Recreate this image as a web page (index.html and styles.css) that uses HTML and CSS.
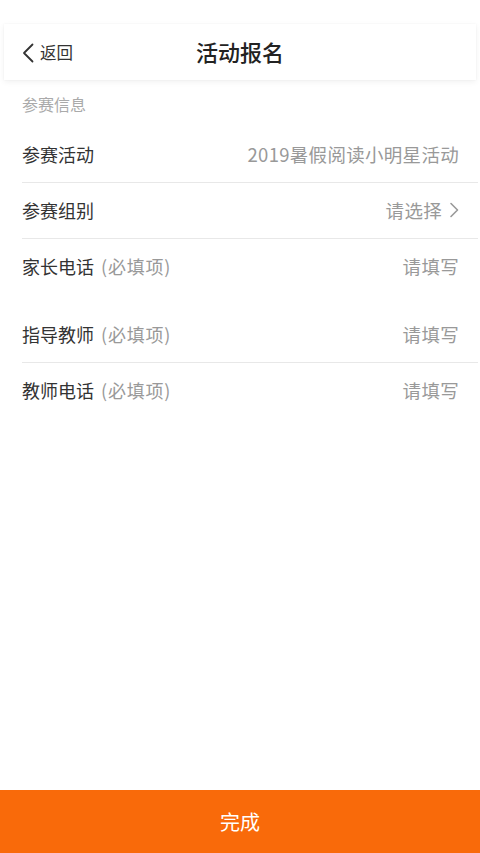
FILE: index.html
```html
<!DOCTYPE html>
<html lang="zh">
<head>
<meta charset="utf-8">
<link rel="stylesheet" href="styles.css">
</head>
<body>
<div class="page">
  <header class="nav">
    <div class="back">
      <svg class="back-icon" viewBox="0 0 12 20" width="12" height="20"><path d="M10.5 1.5 L2 10 L10.5 18.5" fill="none" stroke="#333" stroke-width="1.8" stroke-linecap="round" stroke-linejoin="round"/></svg>
      <span>返回</span>
    </div>
    <div class="title">活动报名</div>
  </header>
  <div class="section-title">参赛信息</div>
  <div class="group">
    <div class="row line">
      <span class="label">参赛活动</span>
      <span class="value">2019暑假阅读小明星活动</span>
    </div>
    <div class="row line">
      <span class="label">参赛组别</span>
      <span class="value">请选择<svg class="chev" viewBox="0 0 10 16" width="10" height="16"><path d="M2 1.5 L8.5 8 L2 14.5" fill="none" stroke="#999" stroke-width="1.6" stroke-linecap="round" stroke-linejoin="round"/></svg></span>
    </div>
    <div class="row">
      <span class="label">家长电话<em>(必填项)</em></span>
      <span class="value">请填写</span>
    </div>
  </div>
  <div class="group gap">
    <div class="row line">
      <span class="label">指导教师<em>(必填项)</em></span>
      <span class="value">请填写</span>
    </div>
    <div class="row">
      <span class="label">教师电话<em>(必填项)</em></span>
      <span class="value">请填写</span>
    </div>
  </div>
  <div class="spacer"></div>
  <div class="submit">完成</div>
</div>
</body>
</html>
```
FILE: styles.css
```css
* { box-sizing: border-box; }
html, body { margin: 0; padding: 0; }
body {
  font-family: "Noto Sans CJK SC", "Noto Sans", sans-serif;
  background: #fff;
  color: #333;
}
.page {
  width: 480px;
  height: 853px;
  display: flex;
  flex-direction: column;
  padding-top: 24px;
}
.nav {
  margin: 0 4px;
  height: 56px;
  background: #fff;
  box-shadow: 0 2px 6px rgba(0, 0, 0, 0.06), 0 0 2px rgba(0,0,0,0.04);
  position: relative;
  display: flex;
  align-items: center;
  justify-content: center;
}
.back {
  position: absolute;
  left: 18px;
  top: 0;
  bottom: 0;
  display: flex;
  align-items: center;
  gap: 6px;
  font-size: 16.5px;
  color: #333;
}
.back-icon { display: block; margin-top: 1px; }
.title {
  font-size: 22px;
  font-weight: 500;
  color: #222;
  margin-top: -2px;
}
.section-title {
  height: 47px;
  padding-left: 22px;
  display: flex;
  align-items: center;
  font-size: 16px;
  color: #aaa;
}
.group { margin-left: 22px; margin-right: 2px; }
.group.gap { margin-top: 12px; }
.row {
  height: 56px;
  display: flex;
  align-items: center;
  justify-content: space-between;
  padding-right: 19px;
  padding-bottom: 2px;
}
.row.line { border-bottom: 1px solid #e8e8e8; }
.label { font-size: 18px; color: #333; }
.label em { font-style: normal; color: #999; margin-left: 7px; letter-spacing: 0.8px; }
.value {
  font-size: 18.5px;
  letter-spacing: 0.3px;
  color: #999;
  display: flex;
  align-items: center;
}
.chev { margin-left: 7px; display: block; }
.spacer { flex: 1; }
.submit {
  height: 63px;
  background: #f96a0a;
  color: #fff;
  font-size: 20px;
  display: flex;
  align-items: center;
  justify-content: center;
}
```
